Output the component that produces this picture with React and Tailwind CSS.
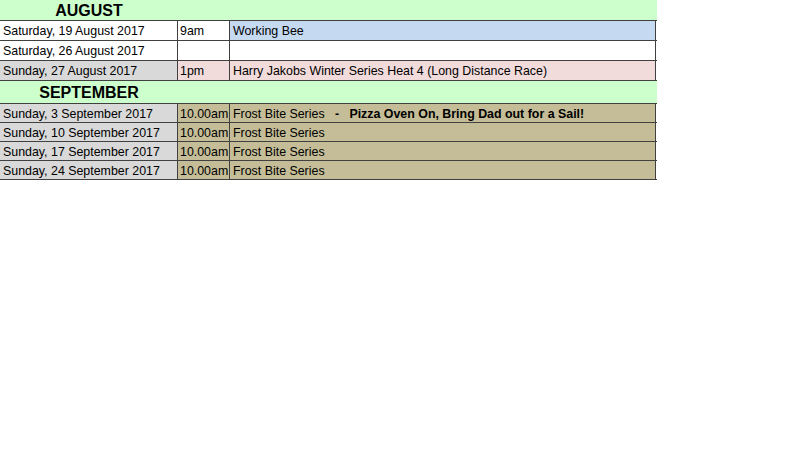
import React from 'react';

const font = { fontFamily: '"Liberation Sans", Arial, sans-serif' };

const august = [
  { date: 'Saturday, 19 August 2017', time: '9am', event: 'Working Bee', dateBg: 'bg-white', timeBg: 'bg-white', eventBg: 'bg-[#c5d9f1]' },
  { date: 'Saturday, 26 August 2017', time: '', event: '', dateBg: 'bg-white', timeBg: 'bg-white', eventBg: 'bg-white' },
  { date: 'Sunday, 27 August 2017', time: '1pm', event: 'Harry Jakobs Winter Series Heat 4 (Long Distance Race)', dateBg: 'bg-[#d9d9d9]', timeBg: 'bg-[#f2dcdb]', eventBg: 'bg-[#f2dcdb]' },
];

const september = [
  { date: 'Sunday, 3 September 2017', note: 'Pizza Oven On, Bring Dad out for a Sail!' },
  { date: 'Sunday, 10 September 2017' },
  { date: 'Sunday, 17 September 2017' },
  { date: 'Sunday, 24 September 2017' },
];

const MonthHeader = ({ label, h }) => (
  <div className={`flex ${h} bg-[#ccffcc]`}>
    <div className="w-[178px] flex items-center justify-center pt-[2px] font-bold text-[16px] leading-none text-black">
      {label}
    </div>
  </div>
);

const Row = ({ h, first, dateBg, timeBg, eventBg, date, time, children }) => (
  <div className={`flex ${h} border-b border-[#404040] ${first ? 'border-t' : ''}`}>
    <div className={`w-[178px] shrink-0 border-r border-[#404040] pl-[3px] pt-[2px] flex items-center ${dateBg}`}>{date}</div>
    <div className={`w-[52px] shrink-0 border-r border-[#404040] pl-[2px] pt-[2px] flex items-center ${timeBg}`}>{time}</div>
    <div className={`w-[426px] shrink-0 border-r border-[#404040] pl-[3px] pt-[2px] flex items-center whitespace-pre ${eventBg}`}>{children}</div>
  </div>
);

export default function App() {
  return (
    <div className="w-[800px] h-[450px] bg-white text-black text-[12.4px] leading-none" style={font}>
      <div className="w-[657px]">
        <MonthHeader label="AUGUST" h="h-[20px]" />
        {august.map((r, i) => (
          <Row key={r.date} h={i === 0 ? 'h-[21px]' : 'h-[20px]'} first={i === 0} {...r}>
            {r.event}
          </Row>
        ))}
        <MonthHeader label="SEPTEMBER" h="h-[22px]" />
        {september.map((r, i) => (
          <Row
            key={r.date}
            h={i === 0 ? 'h-[20px]' : 'h-[19px]'}
            first={i === 0}
            date={r.date}
            time="10.00am"
            dateBg="bg-[#d9d9d9]"
            timeBg="bg-[#c4bd97]"
            eventBg="bg-[#c4bd97]"
          >
            Frost Bite Series
            {r.note && <span className="font-bold">{'   -   '}{r.note}</span>}
          </Row>
        ))}
      </div>
    </div>
  );
}
